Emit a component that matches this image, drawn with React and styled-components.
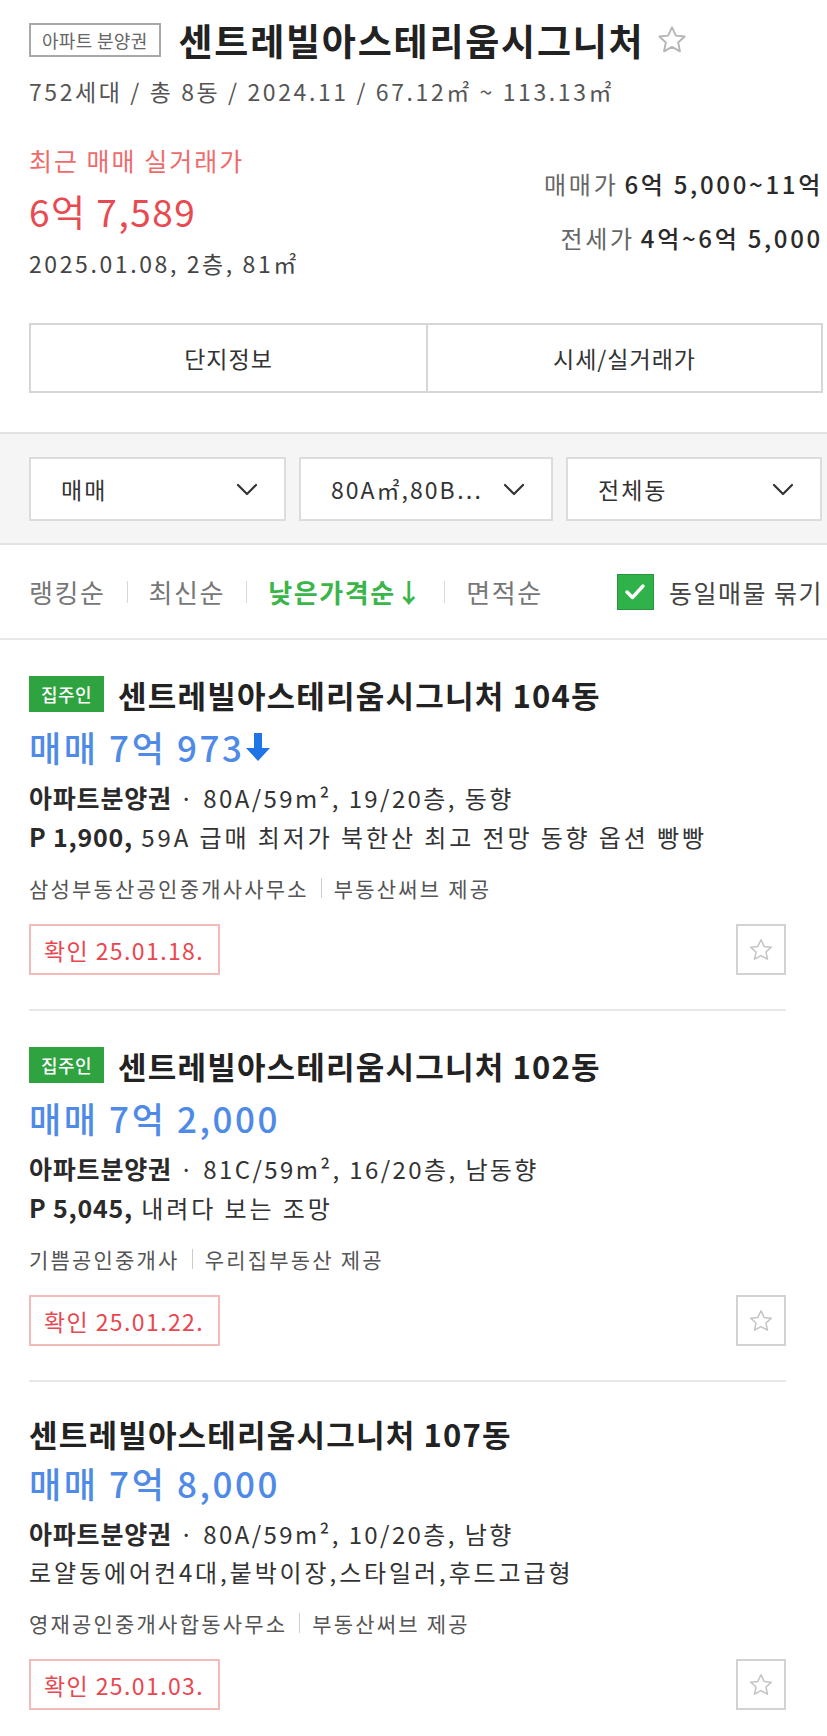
import React from 'react';
import styled, { createGlobalStyle } from 'styled-components';

const GlobalStyle = createGlobalStyle`
  html, body {
    margin: 0;
    padding: 0;
    background: #fff;
    overflow-x: hidden;
  }
  body {
    font-family: "Noto Sans CJK KR", "Noto Sans", sans-serif;
    color: #222;
  }
`;

const Page = styled.div`
  width: 827px;
`;

const Header = styled.section`
  padding: 22px 4px 0 29px;
`;

const TitleRow = styled.div`
  display: flex;
  align-items: center;
  height: 36px;
`;

const TypeTag = styled.span`
  display: inline-flex;
  align-items: center;
  height: 34px;
  box-sizing: border-box;
  padding: 0 11px;
  border: 2px solid #a8a8a8;
  color: #666;
  font-size: 18px;
  letter-spacing: 0.3px;
  margin-right: 18px;
`;

const ComplexName = styled.h1`
  margin: 0;
  font-size: 37px;
  font-weight: 700;
  letter-spacing: 1.8px;
  color: #222;
  line-height: 36px;
`;

const HeaderStar = styled.span`
  display: inline-flex;
  margin-left: 12px;
  color: #b5b5b5;
`;

const Meta = styled.div`
  margin-top: 18px;
  line-height: 30px;
  font-size: 23px;
  color: #555;
  letter-spacing: 2.6px;
  white-space: nowrap;
`;

const PriceBlock = styled.div`
  display: flex;
  justify-content: space-between;
  align-items: center;
  margin-top: 38px;
`;

const RecentLabel = styled.div`
  line-height: 32px;
  font-size: 25px;
  color: #ef6b6b;
  letter-spacing: 2px;
`;

const RecentPrice = styled.div`
  margin-top: 12px;
  line-height: 46px;
  font-size: 37px;
  color: #e84a52;
  letter-spacing: 1.5px;
`;

const RecentDate = styled.div`
  margin-top: 14px;
  line-height: 30px;
  font-size: 23px;
  color: #444;
  letter-spacing: 2.6px;
`;

const RangeList = styled.div`
  display: flex;
  flex-direction: column;
  align-items: flex-end;
  gap: 20px;
`;

const RangeLine = styled.div`
  line-height: 34px;
  font-size: 24px;
  color: #666;
  letter-spacing: 2.7px;
  white-space: nowrap;

  b {
    color: #2a2a2a;
    font-weight: 500;
    margin-left: 6px;
  }
`;

const TabBar = styled.div`
  display: grid;
  grid-template-columns: 1fr 1fr;
  margin-top: 45px;
  height: 70px;
  box-sizing: border-box;
  border: 2px solid #d6d6d6;
`;

const Tab = styled.div`
  display: flex;
  align-items: center;
  justify-content: center;
  font-size: 23px;
  color: #333;
  letter-spacing: 1px;
  & + & {
    border-left: 2px solid #d6d6d6;
  }
`;

const FilterBar = styled.div`
  margin-top: 39px;
  background: #f5f5f5;
  border-top: 2px solid #e2e2e2;
  border-bottom: 2px solid #e2e2e2;
  padding: 23px 4px 22px 29px;
  display: grid;
  grid-template-columns: 257px 254px 256px;
  gap: 13px;
`;

const Select = styled.div`
  display: flex;
  align-items: center;
  justify-content: space-between;
  height: 64px;
  box-sizing: border-box;
  background: #fff;
  border: 2px solid #dcdcdc;
  padding: 0 26px 0 30px;
  font-size: 23px;
  color: #333;
  letter-spacing: 2px;
  white-space: nowrap;
`;

const SortBar = styled.div`
  display: flex;
  align-items: center;
  height: 93px;
  padding: 0 4px 0 29px;
  border-bottom: 2px solid #e8e8e8;
`;

const SortItem = styled.span`
  font-size: 26px;
  letter-spacing: 1.6px;
  color: ${p => (p.$active ? '#3ab54a' : '#777')};
  font-weight: ${p => (p.$active ? 700 : 400)};
`;

const SortDivider = styled.span`
  width: 1px;
  height: 22px;
  background: #d8d8d8;
  margin: 0 21px;
`;

const Bundle = styled.label`
  margin-left: auto;
  display: flex;
  align-items: center;
  gap: 15px;
  font-size: 25px;
  color: #444;
  letter-spacing: 1.5px;
  white-space: nowrap;
`;

const CheckBox = styled.span`
  display: inline-flex;
  align-items: center;
  justify-content: center;
  width: 37px;
  height: 36px;
  background: #2fb24a;
  border: 1px solid #27953d;
  box-sizing: border-box;
`;

const List = styled.ul`
  list-style: none;
  margin: 0;
  padding: 0;
`;

const Card = styled.li`
  margin: 0 41px 0 29px;
  padding: 36px 0 34px;
  border-bottom: ${p => (p.$last ? 'none' : '2px solid #e8e8e8')};
`;

const CardTitle = styled.div`
  display: flex;
  align-items: center;
  height: ${p => (p.$badge ? 36 : 30)}px;
  font-size: 31px;
  font-weight: 700;
  letter-spacing: 1.2px;
  color: #222;
  white-space: nowrap;
`;

const OwnerBadge = styled.span`
  display: inline-flex;
  align-items: center;
  justify-content: center;
  width: 75px;
  height: 36px;
  background: #2ea33f;
  color: #fff;
  font-size: 18px;
  font-weight: 500;
  letter-spacing: 0.5px;
  margin-right: 14px;
`;

const DealPrice = styled.div`
  display: flex;
  align-items: center;
  margin-top: 14px;
  line-height: 42px;
  font-size: 35px;
  font-weight: 500;
  color: #4f8be6;
  letter-spacing: 2.6px;
`;

const InfoLine = styled.div`
  margin-top: ${p => p.$gap || 0}px;
  line-height: 38px;
  font-size: 24px;
  color: #333;
  letter-spacing: ${p => p.$wide ? 2.9 : 2.4}px;
  white-space: nowrap;

  b {
    font-weight: 700;
    font-size: 25px;
    letter-spacing: 0.8px;
    color: #2a2a2a;
  }
`;

const Agency = styled.div`
  display: flex;
  align-items: center;
  margin-top: 17px;
  line-height: 30px;
  font-size: 21px;
  color: #555;
  letter-spacing: 2.2px;
  white-space: nowrap;
`;

const AgencyDivider = styled.span`
  width: 1px;
  height: 20px;
  background: #ccc;
  margin: 0 12px;
`;

const CardFoot = styled.div`
  display: flex;
  justify-content: space-between;
  align-items: center;
  margin-top: 21px;
`;

const Confirmed = styled.span`
  display: inline-flex;
  align-items: center;
  height: 51px;
  width: 191px;
  box-sizing: border-box;
  padding: 0 13px;
  border: 2px solid #f4b9b9;
  color: #e8474f;
  font-size: 23px;
  letter-spacing: 1.4px;
  white-space: nowrap;
`;

const StarButton = styled.span`
  display: inline-flex;
  align-items: center;
  justify-content: center;
  width: 50px;
  height: 51px;
  box-sizing: border-box;
  border: 2px solid #d2d2d2;
  color: #c4c4c4;
`;

const StarIcon = ({ size }) => (
  <svg width={size} height={size} viewBox="0 0 24 24" fill="none" stroke="currentColor" strokeWidth="1.4" strokeLinejoin="round">
    <path d="M12 2.5l2.9 6.2 6.6.7-4.9 4.5 1.4 6.6L12 17.2l-6 3.3 1.4-6.6L2.5 9.4l6.6-.7z" />
  </svg>
);

const Chevron = () => (
  <svg width="22" height="13" viewBox="0 0 22 13" fill="none" stroke="#333" strokeWidth="2.2" strokeLinecap="round" strokeLinejoin="round">
    <polyline points="2,2 11,11 20,2" />
  </svg>
);

const Check = () => (
  <svg width="22" height="18" viewBox="0 0 22 18" fill="none" stroke="#fff" strokeWidth="3.4" strokeLinecap="round" strokeLinejoin="round">
    <polyline points="3,9 8.5,14.5 19,3" />
  </svg>
);

const DownArrow = () => (
  <svg width="26" height="30" viewBox="0 0 26 30">
    <path d="M9 1h8v15h8L13 29 1 16h8z" fill="#1f74e6" />
  </svg>
);

const listings = [
  {
    owner: true,
    name: '센트레빌아스테리움시그니처 104동',
    price: '매매 7억 973',
    drop: true,
    spec: '80A/59m², 19/20층, 동향',
    note: { bold: 'P 1,900,', text: ' 59A 급매 최저가 북한산 최고 전망 동향 옵션 빵빵' },
    agency: '삼성부동산공인중개사사무소',
    source: '부동산써브 제공',
    confirmed: '확인 25.01.18.',
  },
  {
    owner: true,
    name: '센트레빌아스테리움시그니처 102동',
    price: '매매 7억 2,000',
    spec: '81C/59m², 16/20층, 남동향',
    note: { bold: 'P 5,045,', text: ' 내려다 보는 조망' },
    agency: '기쁨공인중개사',
    source: '우리집부동산 제공',
    confirmed: '확인 25.01.22.',
  },
  {
    owner: false,
    name: '센트레빌아스테리움시그니처 107동',
    price: '매매 7억 8,000',
    spec: '80A/59m², 10/20층, 남향',
    note: { bold: '', text: '로얄동에어컨4대,붙박이장,스타일러,후드고급형' },
    agency: '영재공인중개사합동사무소',
    source: '부동산써브 제공',
    confirmed: '확인 25.01.03.',
  },
];

const App = () => {
  return (
    <Page>
      <GlobalStyle />
      <Header>
        <TitleRow>
          <TypeTag>아파트 분양권</TypeTag>
          <ComplexName>센트레빌아스테리움시그니처</ComplexName>
          <HeaderStar><StarIcon size={32} /></HeaderStar>
        </TitleRow>
        <Meta>752세대 / 총 8동 / 2024.11 / 67.12㎡ ~ 113.13㎡</Meta>
        <PriceBlock>
          <div>
            <RecentLabel>최근 매매 실거래가</RecentLabel>
            <RecentPrice>6억 7,589</RecentPrice>
            <RecentDate>2025.01.08, 2층, 81㎡</RecentDate>
          </div>
          <RangeList>
            <RangeLine>매매가<b>6억 5,000~11억</b></RangeLine>
            <RangeLine>전세가<b>4억~6억 5,000</b></RangeLine>
          </RangeList>
        </PriceBlock>
        <TabBar>
          <Tab>단지정보</Tab>
          <Tab>시세/실거래가</Tab>
        </TabBar>
      </Header>

      <FilterBar>
        <Select>매매<Chevron /></Select>
        <Select>80A㎡,80B⋯<Chevron /></Select>
        <Select>전체동<Chevron /></Select>
      </FilterBar>

      <SortBar>
        <SortItem>랭킹순</SortItem>
        <SortDivider />
        <SortItem>최신순</SortItem>
        <SortDivider />
        <SortItem $active>낮은가격순↓</SortItem>
        <SortDivider />
        <SortItem>면적순</SortItem>
        <Bundle>
          <CheckBox><Check /></CheckBox>
          동일매물 묶기
        </Bundle>
      </SortBar>

      <List>
        {listings.map((item, i) => (
          <Card key={item.name} $last={i === listings.length - 1}>
            <CardTitle $badge={item.owner}>
              {item.owner && <OwnerBadge>집주인</OwnerBadge>}
              {item.name}
            </CardTitle>
            <DealPrice>
              {item.price}
              {item.drop && <DownArrow />}
            </DealPrice>
            <InfoLine $gap={10}><b>아파트분양권</b> · {item.spec}</InfoLine>
            <InfoLine $wide>
              {item.note.bold && <b>{item.note.bold}</b>}
              {item.note.text}
            </InfoLine>
            <Agency>
              {item.agency}
              <AgencyDivider />
              {item.source}
            </Agency>
            <CardFoot>
              <Confirmed>{item.confirmed}</Confirmed>
              <StarButton><StarIcon size={26} /></StarButton>
            </CardFoot>
          </Card>
        ))}
      </List>
    </Page>
  );
};

export default App;
